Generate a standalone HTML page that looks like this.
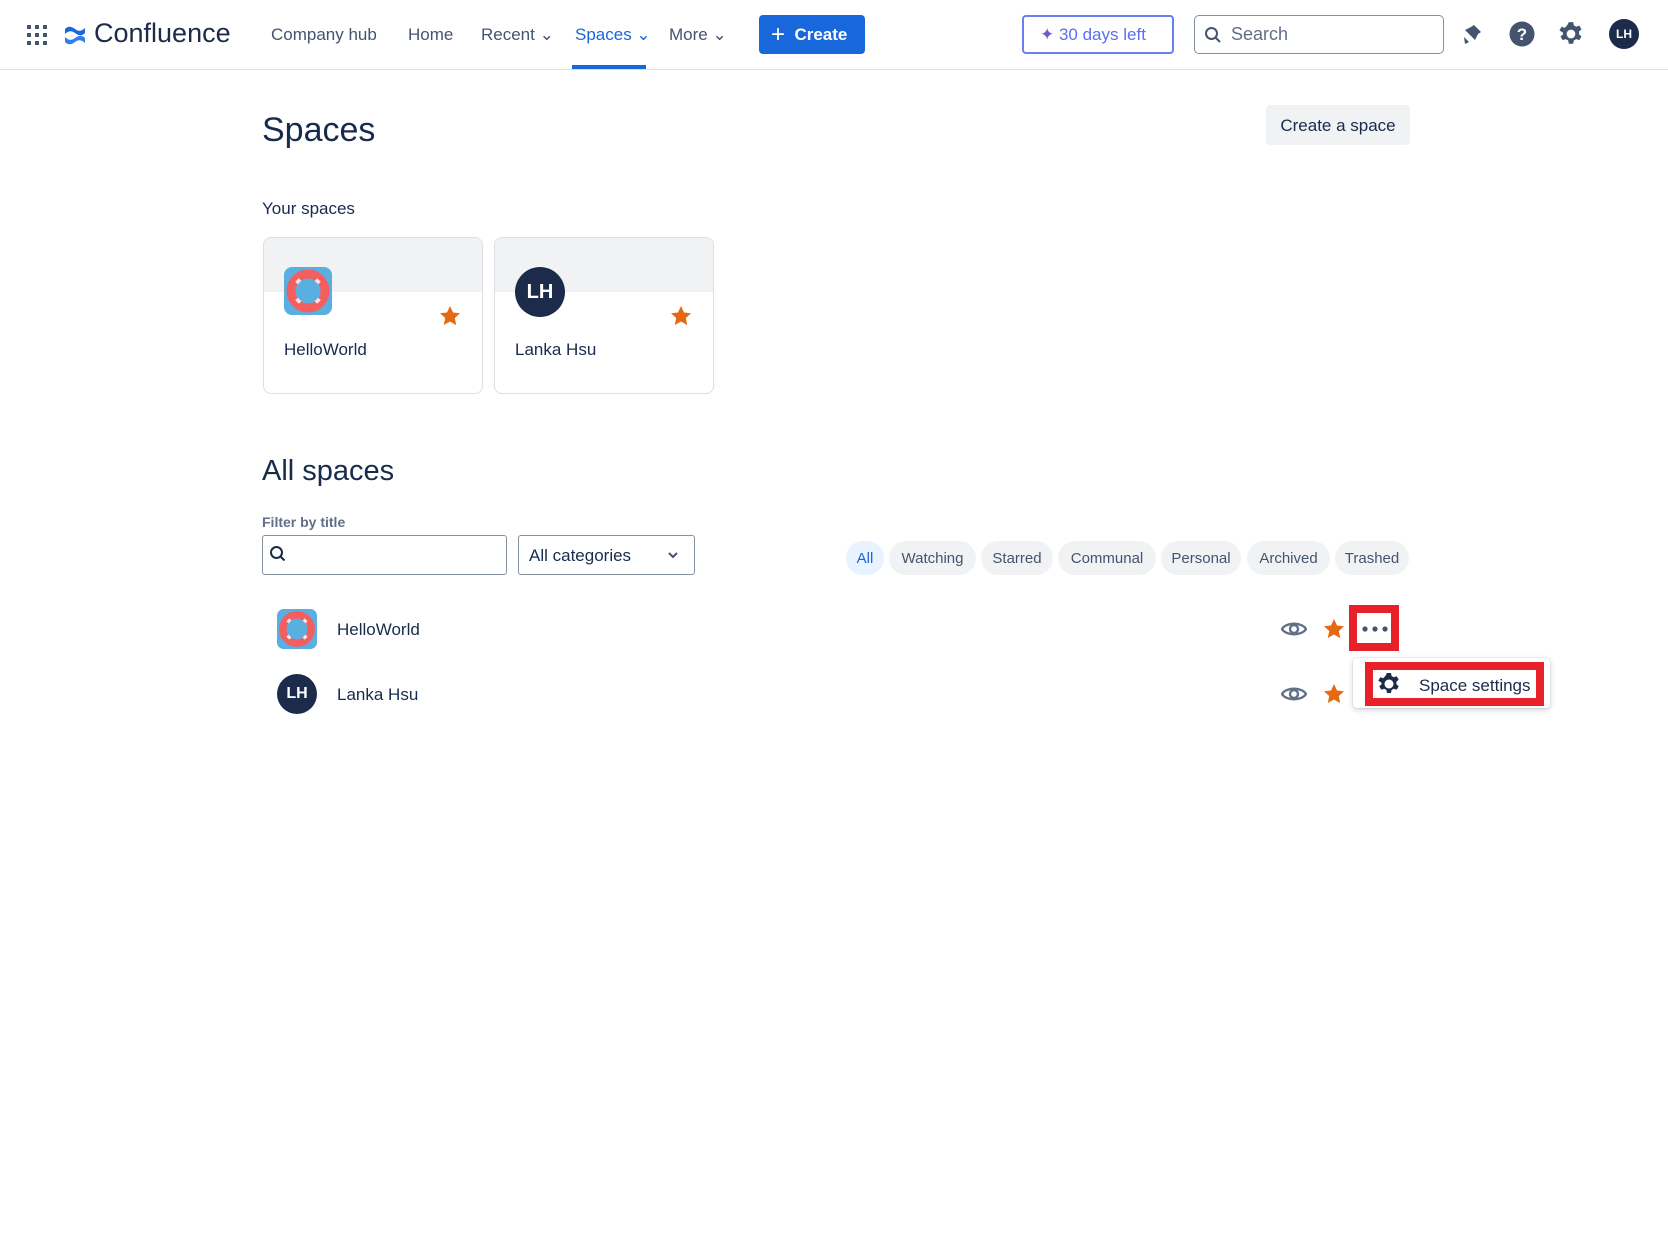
<!DOCTYPE html>
<html><head><meta charset="utf-8"><style>
*{box-sizing:border-box;margin:0;padding:0}
body{width:1668px;height:1250px;background:#fff;font-family:"Liberation Sans",sans-serif;color:#172b4d;position:relative;overflow:hidden}
.a{position:absolute}
.nav{font-size:17px;color:#44546f;top:25px}
.chip{position:absolute;top:541px;height:34px;border-radius:17px;background:#f1f2f4;font-size:15px;color:#44546f;text-align:center;line-height:35px}
.card{position:absolute;top:237px;width:220px;height:157px;border:1px solid #dcdfe4;border-radius:8px;overflow:hidden;background:#fff}
.card .band{height:54px;background:#f1f2f4}
.lh{background:#1c2b4a;color:#fff;border-radius:50%;font-weight:bold;text-align:center}
</style></head><body>
<div class="a" style="left:0;top:69px;width:1668px;height:1px;background:#dcdfe4"></div>
<svg class="a" style="left:27px;top:25px" width="20" height="20"><g fill="#44546f">
<rect x="0" y="0" width="4" height="4"/><rect x="8" y="0" width="4" height="4"/><rect x="16" y="0" width="4" height="4"/>
<rect x="0" y="8" width="4" height="4"/><rect x="8" y="8" width="4" height="4"/><rect x="16" y="8" width="4" height="4"/>
<rect x="0" y="16" width="4" height="4"/><rect x="8" y="16" width="4" height="4"/><rect x="16" y="16" width="4" height="4"/></g></svg>
<svg class="a" style="left:64px;top:24px" width="22" height="22" viewBox="0 0 22 22"><path d="M1 5c3-3 6-3 10 0s7 2 10-1l0 5c-3 3-6 3-10 0S4 7 1 10z" fill="#1868db"/><path d="M1 18c3 3 6 3 10 0s7-2 10 1l0-5c-3-3-6-3-10 0S4 16 1 13z" fill="#357de8"/></svg>
<div class="a" style="left:94px;top:18px;font-size:27px;color:#1c2b4a">Confluence</div>
<div class="a nav" style="left:271px">Company hub</div>
<div class="a nav" style="left:408px">Home</div>
<div class="a nav" style="left:481px">Recent ⌄</div>
<div class="a nav" style="left:575px;color:#1868db">Spaces ⌄</div>
<div class="a" style="left:572px;top:65px;width:74px;height:4px;background:#1868db"></div>
<div class="a nav" style="left:669px">More ⌄</div>
<div class="a" style="left:759px;top:15px;width:106px;height:39px;background:#1868db;border-radius:4px;color:#fff;font-size:17px;font-weight:bold;line-height:39px;padding-left:12px"><span style="font-size:24px;font-weight:normal;vertical-align:-2px">+</span>&nbsp; Create</div>
<div class="a" style="left:1022px;top:15px;width:152px;height:39px;border:2px solid #6a7ef0;border-radius:4px;color:#5b6ff0;font-size:17px;line-height:36px;padding-left:16px"><span style="color:#6e5dc6">✦</span> 30 days left</div>
<div class="a" style="left:1194px;top:15px;width:250px;height:39px;border:1px solid #8590a2;border-radius:5px;color:#626f86;font-size:18px;line-height:37px;padding-left:36px">Search</div>
<svg class="a" style="left:1204px;top:26px" width="18" height="18"><circle cx="7.5" cy="7.5" r="5.5" fill="none" stroke="#44546f" stroke-width="2"/><path d="M12 12l4 4" stroke="#44546f" stroke-width="2"/></svg>
<svg class="a" style="left:1460px;top:22px" width="24" height="24" viewBox="0 0 24 24"><path d="M14 3l7 7-3 2-3 6-10-10 6-3z" fill="#44546f"/><path d="M4 15l5 5-4 2z" fill="#44546f"/></svg>
<svg class="a" style="left:1509px;top:21px" width="26" height="26"><circle cx="13" cy="13" r="12.5" fill="#44546f"/><text x="13" y="19" font-size="17" font-weight="bold" fill="#fff" text-anchor="middle" font-family="Liberation Sans">?</text></svg>
<svg class="a" style="left:1558px;top:21px" width="26" height="26" viewBox="0 0 24 24"><path fill="#44546f" d="M10 1h4l.6 3 2.2 1.3 2.9-1 2 3.4-2.3 2 0 2.6 2.3 2-2 3.4-2.9-1-2.2 1.3-.6 3h-4l-.6-3-2.2-1.3-2.9 1-2-3.4 2.3-2V10.7L1.3 8.7l2-3.4 2.9 1L8.4 4z"/><circle cx="12" cy="12" r="4" fill="#fff"/></svg>
<div class="a lh" style="left:1609px;top:19px;width:30px;height:30px;line-height:30px;font-size:12px">LH</div>

<div class="a" style="left:262px;top:111px;font-size:34px;color:#172b4d">Spaces</div>
<div class="a" style="left:1266px;top:105px;width:144px;height:40px;background:#f1f2f4;border-radius:4px;font-size:17px;line-height:41px;text-align:center;color:#172b4d">Create a space</div>
<div class="a" style="left:262px;top:199px;font-size:17px;color:#172b4d">Your spaces</div>

<svg width="0" height="0" style="position:absolute"><defs>
<g id="buoy"><rect width="48" height="48" rx="8" fill="#5aafe1"/><circle cx="24" cy="24" r="17" fill="none" stroke="#f35e5e" stroke-width="9"/><g stroke="#fbe3e3" stroke-width="5"><path d="M13 13l5 5M35 13l-5 5M13 35l5-5M35 35l-5-5"/></g><circle cx="24" cy="24" r="12" fill="#5aafe1"/></g>
<path id="star" d="M10 0l3 6.5 7 .8-5.2 4.8 1.4 7L10 15.5 3.8 19l1.4-7L0 7.3l7-.8z" fill="#e56910"/>
</defs></svg>

<div class="card" style="left:263px"><div class="band"></div>
<svg class="a" style="left:20px;top:29px" width="50" height="50"><use href="#buoy"/></svg>
<svg class="a" style="left:176px;top:68px" width="20" height="20"><use href="#star"/></svg>
<div class="a" style="left:20px;top:102px;font-size:17px">HelloWorld</div></div>
<div class="card" style="left:494px"><div class="band"></div>
<div class="a lh" style="left:20px;top:29px;width:50px;height:50px;line-height:50px;font-size:20px">LH</div>
<svg class="a" style="left:176px;top:68px" width="20" height="20"><use href="#star"/></svg>
<div class="a" style="left:20px;top:102px;font-size:17px">Lanka Hsu</div></div>

<div class="a" style="left:262px;top:455px;font-size:29px;color:#172b4d">All spaces</div>
<div class="a" style="left:262px;top:514px;font-size:14px;font-weight:bold;color:#626f86">Filter by title</div>
<div class="a" style="left:262px;top:535px;width:245px;height:40px;border:1px solid #8590a2;border-radius:3px"></div>
<svg class="a" style="left:269px;top:545px" width="18" height="18"><circle cx="7.5" cy="7.5" r="5.5" fill="none" stroke="#172b4d" stroke-width="2"/><path d="M11.5 11.5l4 4" stroke="#172b4d" stroke-width="2"/></svg>
<div class="a" style="left:518px;top:535px;width:177px;height:40px;border:1px solid #8590a2;border-radius:3px;font-size:17px;line-height:40px;padding-left:10px">All categories</div>
<svg class="a" style="left:667px;top:551px" width="12" height="8"><path d="M2 2l4 4 4-4" fill="none" stroke="#44546f" stroke-width="2"/></svg>

<div class="chip" style="left:846px;width:38px;background:#e9f2ff;color:#1868db">All</div>
<div class="chip" style="left:889px;width:87px">Watching</div>
<div class="chip" style="left:981px;width:72px">Starred</div>
<div class="chip" style="left:1058px;width:98px">Communal</div>
<div class="chip" style="left:1161px;width:80px">Personal</div>
<div class="chip" style="left:1247px;width:83px">Archived</div>
<div class="chip" style="left:1335px;width:74px">Trashed</div>

<svg class="a" style="left:277px;top:609px" width="40" height="40" viewBox="0 0 48 48"><use href="#buoy"/></svg>
<div class="a" style="left:337px;top:620px;font-size:17px">HelloWorld</div>
<div class="a lh" style="left:277px;top:674px;width:40px;height:40px;line-height:40px;font-size:16px">LH</div>
<div class="a" style="left:337px;top:685px;font-size:17px">Lanka Hsu</div>

<svg class="a" style="left:1281px;top:619px" width="26" height="20"><path d="M1 10C5 3 21 3 25 10 21 17 5 17 1 10z" fill="none" stroke="#626f86" stroke-width="2.4"/><circle cx="13" cy="10" r="4" fill="none" stroke="#626f86" stroke-width="2.4"/></svg>
<svg class="a" style="left:1281px;top:684px" width="26" height="20"><path d="M1 10C5 3 21 3 25 10 21 17 5 17 1 10z" fill="none" stroke="#626f86" stroke-width="2.4"/><circle cx="13" cy="10" r="4" fill="none" stroke="#626f86" stroke-width="2.4"/></svg>
<svg class="a" style="left:1324px;top:619px" width="20" height="20"><use href="#star"/></svg>
<svg class="a" style="left:1324px;top:684px" width="20" height="20"><use href="#star"/></svg>

<div class="a" style="left:1349px;top:605px;width:50px;height:46px;border:8px solid #e8202a;background:#fff"></div>
<svg class="a" style="left:1362px;top:626px" width="26" height="6"><circle cx="3" cy="3" r="2.6" fill="#44546f"/><circle cx="13" cy="3" r="2.6" fill="#44546f"/><circle cx="23" cy="3" r="2.6" fill="#44546f"/></svg>

<div class="a" style="left:1353px;top:658px;width:197px;height:50px;background:#fff;border-radius:4px;box-shadow:0 2px 6px rgba(9,30,66,.2),0 0 1px rgba(9,30,66,.3)"></div>
<div class="a" style="left:1365px;top:662px;width:179px;height:44px;border:8px solid #e8202a;background:#fff"></div>
<svg class="a" style="left:1377px;top:672px" width="24" height="24" viewBox="0 0 24 24"><path fill="#1c2b4a" d="M10 1h4l.6 3 2.2 1.3 2.9-1 2 3.4-2.3 2 0 2.6 2.3 2-2 3.4-2.9-1-2.2 1.3-.6 3h-4l-.6-3-2.2-1.3-2.9 1-2-3.4 2.3-2V10.7L1.3 8.7l2-3.4 2.9 1L8.4 4z"/><circle cx="12" cy="12" r="4.5" fill="#fff"/></svg>
<div class="a" style="left:1419px;top:676px;font-size:17px;color:#1c2b4a">Space settings</div>
</body></html>
